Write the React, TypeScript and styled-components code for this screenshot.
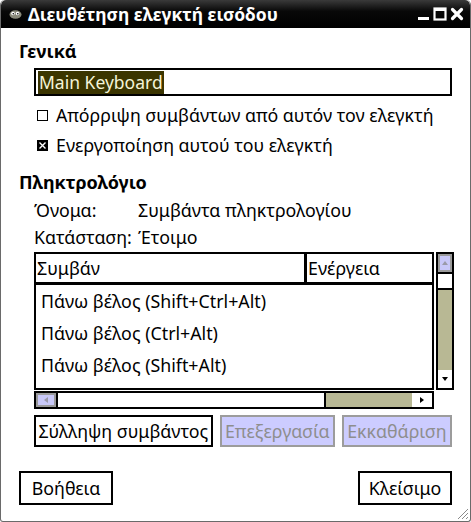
import React from "react";
import styled, { createGlobalStyle } from "styled-components";

const Global = createGlobalStyle`
  html, body { margin: 0; padding: 0; background: #fff; }
  body { font-family: "Noto Sans", "DejaVu Sans", sans-serif; }
`;

const Window = styled.div`
  width: 471px;
  height: 522px;
  box-sizing: border-box;
  border: 1px solid #6a6a6a;
  border-top: none;
  border-radius: 5px 5px 3px 3px;
  background: #fff;
  display: flex;
  flex-direction: column;
  position: relative;
  overflow: hidden;
  color: #000;
  font-size: 17.8px;
  line-height: 24px;
`;

const TitleBar = styled.div`
  height: 28px;
  flex: none;
  background: linear-gradient(#3a3a3a, #080808 40%, #000);
  display: flex;
  align-items: center;
  padding: 0 6px 0 8px;
  color: #fff;
  border-radius: 5px 5px 0 0;
`;

const TitleText = styled.span`
  font-weight: bold;
  font-size: 17.5px;
  margin-left: 6px;
  flex: 1;
`;

const TitleButtons = styled.div`
  display: flex;
  align-items: center;
  gap: 3px;
`;

const Content = styled.div`
  flex: 1;
  display: flex;
  flex-direction: column;
  padding: 13px 18px 0 18px;
`;

const SectionTitle = styled.div`
  font-weight: bold;
  font-size: 18px;
  line-height: 20px;
  height: 20px;
`;

const Indented = styled.div`
  padding-left: 15px;
  display: flex;
  flex-direction: column;
`;

const NameInput = styled.div`
  margin-top: 7px;
  height: 28px;
  box-sizing: border-box;
  border: 2px solid #000;
  display: flex;
  align-items: center;
  padding-left: 2px;
`;

const Selected = styled.span`
  background: #3b3500;
  color: #f4f4d8;
  font-size: 17.5px;
  line-height: 23px;
  padding: 0 1px;
`;

const CheckRow = styled.div`
  display: flex;
  align-items: center;
  height: 30px;
  gap: 8px;
  padding-left: 3px;
`;

const Box = styled.span<{ $checked?: boolean }>`
  width: 11px;
  height: 11px;
  box-sizing: border-box;
  border: 1px solid #000;
  position: relative;
  background: ${(p) => (p.$checked ? "#000" : "#fff")};
  flex: none;
`;

const InfoRow = styled.div`
  display: grid;
  grid-template-columns: 104px 1fr;
  height: 27px;
  align-items: center;
`;

const TreeWrap = styled.div`
  display: grid;
  grid-template-columns: 400px 18px;
  grid-template-rows: 138px 18px;
  column-gap: 2px;
  row-gap: 1px;
  margin-top: 2px;
`;

const Tree = styled.div`
  border: 2px solid #000;
  box-sizing: border-box;
  display: flex;
  flex-direction: column;
`;

const Header = styled.div`
  display: grid;
  grid-template-columns: 268px 1fr;
  border-bottom: 3px solid #000;
  height: 31px;
  box-sizing: border-box;
`;

const HeaderCell = styled.div<{ $last?: boolean }>`
  display: flex;
  align-items: center;
  padding-left: 1px;
  border-left: ${(p) => (p.$last ? "3px solid #000" : "none")};
`;

const Row = styled.div`
  height: 32px;
  display: flex;
  align-items: center;
  padding-left: 5px;
`;

const VScroll = styled.div`
  border: 2px solid #000;
  box-sizing: border-box;
  display: flex;
  flex-direction: column;
  background: #b8b894;
`;

const HScroll = styled.div`
  border: 2px solid #000;
  box-sizing: border-box;
  display: flex;
  background: #b8b894;
`;

const ArrowBtn = styled.div<{ $disabled?: boolean; $vertical?: boolean }>`
  box-sizing: border-box;
  flex: none;
  ${(p) => (p.$vertical ? "height: 18px;" : "width: 20px;")}
  background: ${(p) => (p.$disabled ? "#c8c8f8" : "#fff")};
  border: ${(p) => (p.$disabled ? "2px solid #9a9a9a" : "none")};
  display: flex;
  align-items: center;
  justify-content: center;
`;

const Thumb = styled.div<{ $vertical?: boolean }>`
  background: #fff;
  box-sizing: border-box;
  ${(p) =>
    p.$vertical
      ? "height: 18px; border-bottom: 2px solid #000; border-top: 2px solid #000;"
      : "width: 270px; border-right: 2px solid #000; border-left: 2px solid #000;"}
`;

const Trough = styled.div`
  flex: 1;
`;

const Corner = styled.div``;

const ButtonRow = styled.div`
  display: flex;
  gap: 7px;
  margin-top: 6px;
`;

const Button = styled.div<{ $disabled?: boolean }>`
  height: 32px;
  box-sizing: border-box;
  border: 2px solid ${(p) => (p.$disabled ? "#9c9c9c" : "#000")};
  background: ${(p) => (p.$disabled ? "#ccccff" : "#fff")};
  color: ${(p) => (p.$disabled ? "#8e8e8e" : "#000")};
  display: flex;
  align-items: center;
  justify-content: center;
  padding: 0 2px;
  white-space: nowrap;
`;

const Footer = styled.div`
  display: flex;
  justify-content: space-between;
  margin-top: 24px;
`;

const FooterButton = styled(Button)`
  height: 34px;
  width: 94px;
`;

const Grip = styled.svg`
  position: absolute;
  right: 1px;
  bottom: 1px;
`;

const Arrow = ({ dir }: { dir: "up" | "down" | "left" | "right" }) => {
  const pts = {
    up: "0,4 6,4 3,0",
    down: "0,0 6,0 3,4",
    left: "4,0 4,6 0,3",
    right: "0,0 0,6 4,3",
  }[dir];
  const vertical = dir === "up" || dir === "down";
  const fill = dir === "up" || dir === "left" ? "#9a9aa8" : "#000";
  return (
    <svg width={vertical ? 6 : 4} height={vertical ? 4 : 6}>
      <polygon points={pts} fill={fill} />
    </svg>
  );
};

export default function App() {
  return (
    <>
      <Global />
      <Window>
        <TitleBar>
          <svg width="13" height="10" viewBox="0 0 13 10">
            <ellipse cx="6.5" cy="5.5" rx="6" ry="4.3" fill="#8a8a7a" />
            <circle cx="4" cy="4.5" r="1.8" fill="#fff" />
            <circle cx="8.5" cy="4.5" r="1.8" fill="#fff" />
            <circle cx="4.3" cy="4.7" r="0.8" fill="#000" />
            <circle cx="8.8" cy="4.7" r="0.8" fill="#000" />
          </svg>
          <TitleText>Διευθέτηση ελεγκτή εισόδου</TitleText>
          <TitleButtons>
            <svg width="13" height="13" viewBox="0 0 13 13">
              <rect x="1" y="9" width="11" height="3" fill="#fff" />
            </svg>
            <svg width="14" height="14" viewBox="0 0 14 14">
              <rect x="1.5" y="1.5" width="11" height="11" fill="none" stroke="#fff" strokeWidth="2.2" />
              <rect x="1" y="1" width="12" height="3" fill="#fff" />
            </svg>
            <svg width="14" height="14" viewBox="0 0 14 14">
              <path d="M2.5 2.5 L11.5 11.5 M11.5 2.5 L2.5 11.5" stroke="#fff" strokeWidth="3.2" strokeLinecap="round" />
            </svg>
          </TitleButtons>
        </TitleBar>
        <Content>
          <SectionTitle>Γενικά</SectionTitle>
          <Indented>
            <NameInput>
              <Selected>Main Keyboard</Selected>
            </NameInput>
            <CheckRow style={{ marginTop: 4 }}>
              <Box />
              <span>Απόρριψη συμβάντων από αυτόν τον ελεγκτή</span>
            </CheckRow>
            <CheckRow>
              <Box $checked>
                <svg width="9" height="9" viewBox="0 0 9 9" style={{ position: "absolute", left: 0, top: 0 }}>
                  <path d="M1.5 1.5 L7.5 7.5 M7.5 1.5 L1.5 7.5" stroke="#fff" strokeWidth="1.4" />
                </svg>
              </Box>
              <span>Ενεργοποίηση αυτού του ελεγκτή</span>
            </CheckRow>
          </Indented>
          <SectionTitle style={{ marginTop: 12 }}>Πληκτρολόγιο</SectionTitle>
          <Indented>
            <InfoRow style={{ marginTop: 4 }}>
              <span>Όνομα:</span>
              <span>Συμβάντα πληκτρολογίου</span>
            </InfoRow>
            <InfoRow>
              <span>Κατάσταση:</span>
              <span>Έτοιμο</span>
            </InfoRow>
            <TreeWrap>
              <Tree>
                <Header>
                  <HeaderCell>Συμβάν</HeaderCell>
                  <HeaderCell $last>Ενέργεια</HeaderCell>
                </Header>
                <Row>Πάνω βέλος (Shift+Ctrl+Alt)</Row>
                <Row>Πάνω βέλος (Ctrl+Alt)</Row>
                <Row>Πάνω βέλος (Shift+Alt)</Row>
              </Tree>
              <VScroll>
                <ArrowBtn $vertical $disabled>
                  <Arrow dir="up" />
                </ArrowBtn>
                <Thumb $vertical />
                <Trough />
                <ArrowBtn $vertical>
                  <Arrow dir="down" />
                </ArrowBtn>
              </VScroll>
              <HScroll>
                <ArrowBtn $disabled>
                  <Arrow dir="left" />
                </ArrowBtn>
                <Thumb />
                <Trough />
                <ArrowBtn>
                  <Arrow dir="right" />
                </ArrowBtn>
              </HScroll>
              <Corner />
            </TreeWrap>
            <ButtonRow>
              <Button style={{ width: 180 }}>Σύλληψη συμβάντος</Button>
              <Button $disabled style={{ width: 116 }}>Επεξεργασία</Button>
              <Button $disabled style={{ width: 111 }}>Εκκαθάριση</Button>
            </ButtonRow>
          </Indented>
          <Footer>
            <FooterButton>Βοήθεια</FooterButton>
            <FooterButton>Κλείσιμο</FooterButton>
          </Footer>
        </Content>
        <Grip width="14" height="14" viewBox="0 0 14 14">
          <path d="M13 3 L3 13 M13 7 L7 13 M13 11 L11 13" stroke="#8a8a8a" strokeWidth="1" />
        </Grip>
      </Window>
    </>
  );
}
